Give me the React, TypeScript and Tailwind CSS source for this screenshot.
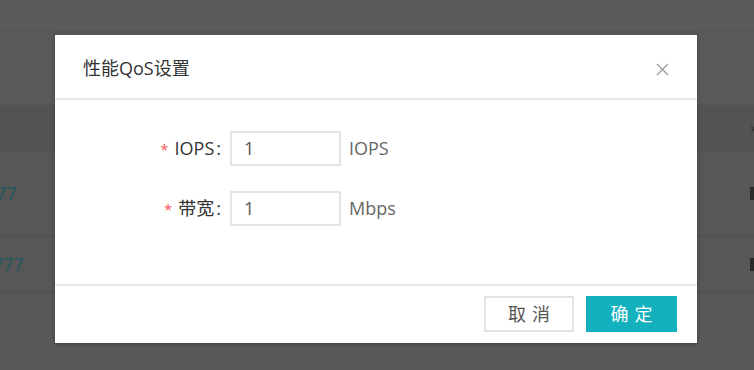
import React from "react";

const font = { fontFamily: "'Open Sans', 'Noto Sans CJK SC', sans-serif" };

function Row({ label, unit }: { label: string; unit: string }) {
  return (
    <div className="flex items-center h-[34px]">
      <div className="w-[167px] flex justify-end items-center pr-[1px]">
        <span className="text-[#f25a5a] text-[15px] leading-none mr-[6px] mt-[2px]">*</span>
        <span className="text-[18px] text-[#333] leading-none">{label}</span>
        <span className="text-[18px] text-[#333] leading-none ml-[2px]">:</span>
      </div>
      <div className="ml-[8px] w-[111px] h-[35px] border-2 border-[#e4e4e4] flex items-center pl-[12px] text-[18px] text-[#555]">
        1
      </div>
      <span className="ml-[8px] text-[18px] text-[#666] leading-none">{unit}</span>
    </div>
  );
}

export default function App() {
  return (
    <div className="relative w-[754px] h-[370px] overflow-hidden bg-[#585858]" style={font}>
      {/* background page */}
      <div className="h-[31px] bg-[#5b5b5b] border-b border-[#525252]" />
      <div className="h-[74px] bg-[#595959]" />
      <div className="h-[47px] bg-[#535353] border-b border-[#4e4e4e] flex items-center justify-end">
        <span className="text-[#2c2c2c] text-[14px] mr-[-4px]">×</span>
      </div>
      <div className="h-[84px] bg-[#575757] border-b border-[#4f4f4f] flex items-center justify-between">
        <span className="ml-[-14px] text-[18px] text-[#1e5660]">777</span>
        <span className="mr-[-6px] w-[10px] h-[13px] bg-[#2a2a2a]" />
      </div>
      <div className="h-[57px] bg-[#575757] border-b border-[#4f4f4f] flex items-center justify-between">
        <span className="ml-[-7px] text-[18px] text-[#1e5660]">777</span>
        <span className="mr-[-6px] w-[10px] h-[13px] bg-[#2a2a2a]" />
      </div>

      {/* modal */}
      <div className="absolute left-[55px] top-[35px] w-[642px] h-[308px] bg-white shadow-[0_1px_4px_rgba(0,0,0,0.25)] flex flex-col">
        <div className="h-[65px] border-b-2 border-[#e6e6e6] flex items-center justify-between pl-[28px] pr-[28px] shrink-0">
          <span className="text-[18px] text-[#333] mt-[3px]">性能QoS设置</span>
          <svg width="13" height="13" viewBox="0 0 13 13" className="mt-[6px]">
            <path d="M1 1 L12 12 M12 1 L1 12" stroke="#9a9a9a" strokeWidth="1.3" fill="none" />
          </svg>
        </div>
        <div className="flex-1 flex flex-col gap-[26px] pt-[31px]">
          <Row label="IOPS" unit="IOPS" />
          <Row label="带宽" unit="Mbps" />
        </div>
        <div className="h-[59px] border-t-2 border-[#e6e6e6] flex items-start justify-end gap-[12px] pt-[10px] pr-[20px] shrink-0">
          <button className="w-[90px] h-[36px] border-2 border-[#e2e2e2] bg-white text-[18px] text-[#555] tracking-[6px] pl-[6px] flex items-center justify-center">
            取消
          </button>
          <button className="w-[91px] h-[36px] bg-[#13b1bd] text-[18px] text-white tracking-[6px] pl-[6px] flex items-center justify-center">
            确定
          </button>
        </div>
      </div>
    </div>
  );
}
